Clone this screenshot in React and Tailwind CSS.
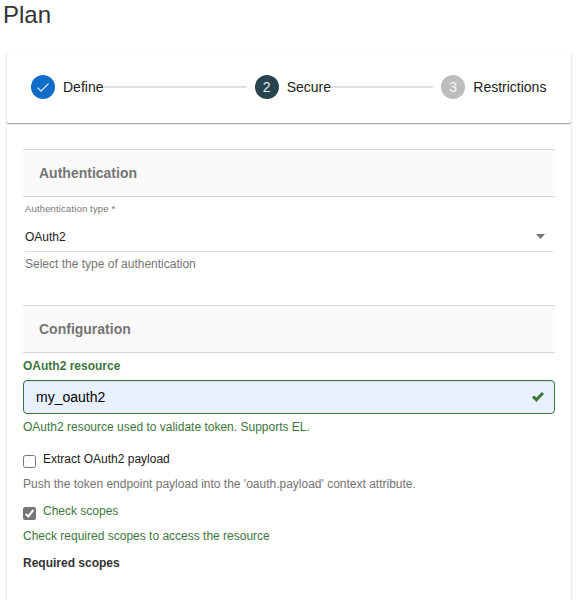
import React from "react";

function Step({ marker, label, color }) {
  return (
    <div className="flex shrink-0 items-center">
      <span className={"flex size-6 items-center justify-center rounded-full text-[14px] text-white/90 " + color}>
        {marker}
      </span>
      <span className="ml-2 text-[14px] leading-6 text-[#212121]">{label}</span>
    </div>
  );
}

function Band({ children }) {
  return (
    <h2 className="flex h-12 items-center border-y border-[#d6d6d6] bg-[#fafafa] px-4 text-[14px] font-bold text-[#757575]">
      {children}
    </h2>
  );
}

function Check({ checked, label, className }) {
  return (
    <div className={"flex h-4 " + className}>
      {checked ? (
        <span className="mt-1 flex size-[13px] shrink-0 items-center justify-center rounded-[2px] bg-[#767676]">
          <svg viewBox="0 0 13 13" className="size-[13px]" fill="none" stroke="white" strokeWidth="2">
            <path d="M2.7 6.9 5.2 9.4 10.4 3" />
          </svg>
        </span>
      ) : (
        <span className="mt-1 size-[13px] shrink-0 rounded-[2.5px] border border-[#767676] bg-white" />
      )}
      <span className="ml-[7px] leading-4">{label}</span>
    </div>
  );
}

export default function App() {
  return (
    <div className="h-[600px] overflow-hidden bg-white pl-[7px] pr-1.5 font-['Liberation_Sans',Arial,sans-serif] text-[12px] text-[#333]">
      <h1 className="-ml-1 h-[51px] text-[24px] leading-[30px] text-[#333]">Plan</h1>
      <main className="h-[600px] rounded-[2px] bg-white shadow-[0_1px_3px_rgba(0,0,0,0.2),0_1px_1px_rgba(0,0,0,0.08)]">
        <div className="flex h-[72px] items-center rounded-[2px] pl-6 pr-[24.6px] shadow-[0_1px_0_rgba(0,0,0,0.3),0_2px_0_rgba(0,0,0,0.06)]">
          <Step
            color="bg-[#106cc8]"
            label="Define"
            marker={
              <svg viewBox="0 0 24 24" className="size-6" fill="none" stroke="currentColor" strokeWidth="1.2">
                <path d="m6.5 12.6 3.5 3.5 7.5-7.5" />
              </svg>
            }
          />
          <div className="mr-2 h-0.5 w-[143.2px] bg-[#e0e0e0]" />
          <Step color="bg-[#28444f]" label="Secure" marker="2" />
          <div className="mr-2 h-0.5 flex-1 bg-[#e0e0e0]" />
          <Step color="bg-[#bdbdbd]" label="Restrictions" marker="3" />
        </div>

        <div className="px-4 pt-[26px]">
          <Band>Authentication</Band>
          <div className="mx-0.5 h-[108px]">
            <div className="pt-[6px] text-[9.5px] leading-3 tracking-[0.15px] text-[#757575]">Authentication type *</div>
            <div className="mt-[9px] flex h-[28px] justify-between border-b border-[#dedede] pr-2 pt-[5px] leading-4 text-[#212121]">
              <span>OAuth2</span>
              <svg viewBox="0 0 9 5" className="mt-[5px] h-[5px] w-[9px] fill-[#757575]">
                <path d="M0 0h9L4.5 5z" />
              </svg>
            </div>
            <div className="mt-1 leading-4 text-[#757575]">Select the type of authentication</div>
          </div>

          <Band>Configuration</Band>
          <div className="mt-[5px] font-bold leading-4 text-[#3c763d]">OAuth2 resource</div>
          <div className="mt-1.5 flex h-[34px] items-center justify-between rounded-[4px] border border-[#3c763d] bg-[#e8f0fe] pl-3 pr-2.5 text-[14px] text-black shadow-[inset_0_1px_1px_rgba(0,0,0,0.075)]">
            <span>my_oauth2</span>
            <svg viewBox="0 0 12 10" className="mb-px h-2.5 w-3 fill-[#3c763d]">
              <path d="M0 5.6 2 3.6 4.4 5.6 10 0 12 2 4.4 10z" />
            </svg>
          </div>
          <div className="mt-[5px] leading-4 text-[#3c763d]">OAuth2 resource used to validate token. Supports EL.</div>
          <Check className="mt-4 text-[#212121]" label="Extract OAuth2 payload" />
          <div className="mt-[9px] leading-4 text-[#737373]">
            Push the token endpoint payload into the 'oauth.payload' context attribute.
          </div>
          <Check checked className="mt-[11px] text-[#3c763d]" label="Check scopes" />
          <div className="mt-[9px] leading-4 text-[#3c763d]">Check required scopes to access the resource</div>
          <div className="mt-[11px] font-bold leading-4 text-[#333]">Required scopes</div>
        </div>
      </main>
    </div>
  );
}
